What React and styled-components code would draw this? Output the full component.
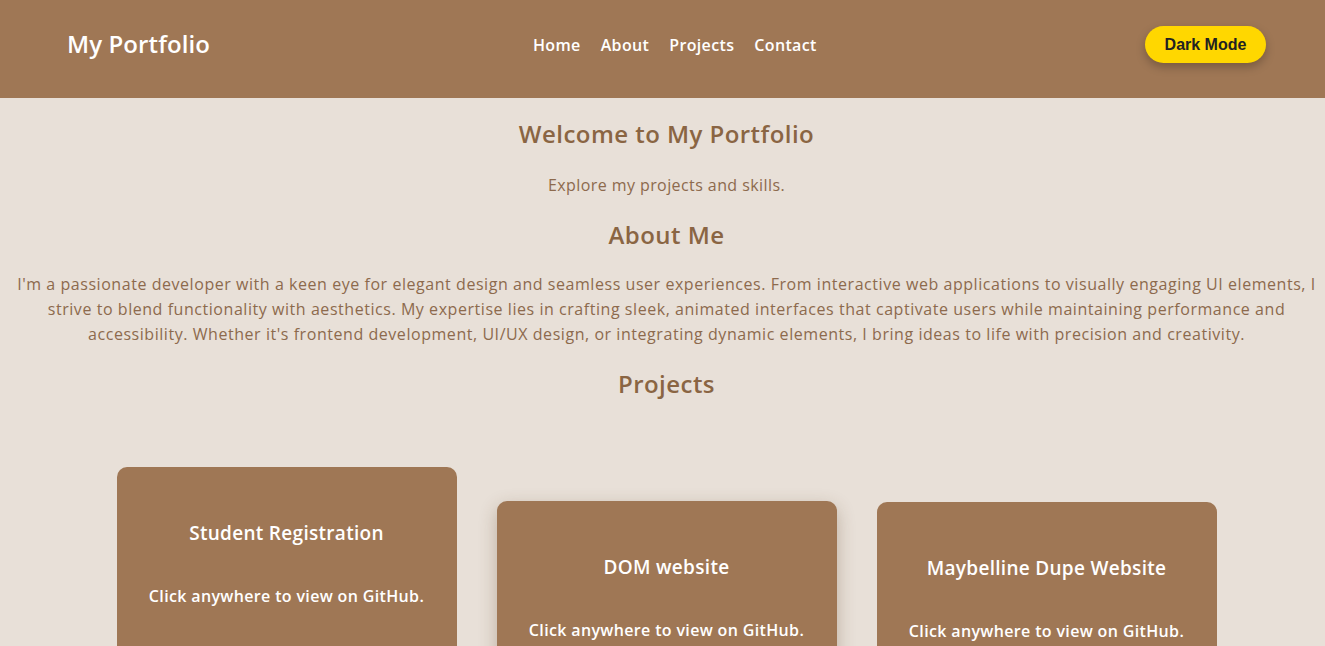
import React from "react"
import styled, { createGlobalStyle } from "styled-components"

const colors = {
  brown: "#9f7755",
  cream: "#e8e0d8",
  heading: "#8a6543",
  text: "#8d6a4d",
  yellow: "#ffd700",
}

const GlobalStyle = createGlobalStyle`
  html, body {
    margin: 0;
    padding: 0;
    overflow: hidden;
    background: ${colors.cream};
  }
  body {
    font-family: "Open Sans", "DejaVu Sans", sans-serif;
  }
`

const Page = styled.div`
  width: 1333px;
  min-height: 646px;
  background: ${colors.cream};
`

const Header = styled.header`
  height: 98px;
  background: ${colors.brown};
  display: flex;
  align-items: center;
  padding: 0 67px 8px;
  box-sizing: border-box;
`

const Logo = styled.h1`
  margin: -3px 0 0;
  font-size: 24px;
  font-weight: 600;
  color: #fff;
  width: 466px;
  letter-spacing: 0.1px;
`

const Nav = styled.nav`
  display: flex;
  gap: 20px;
  a {
    color: #fff;
    font-size: 16px;
    font-weight: 600;
    letter-spacing: 0.35px;
    text-decoration: none;
  }
`

const ModeButton = styled.button`
  margin-left: auto;
  background: ${colors.yellow};
  color: #222;
  border: none;
  border-radius: 20px;
  width: 121px;
  height: 37px;
  font-family: "Liberation Sans", Arial, sans-serif;
  font-size: 16px;
  font-weight: 700;
  box-shadow: 0 4px 10px rgba(0, 0, 0, 0.25);
  margin-top: -1px;
`

const Main = styled.main`
  text-align: center;
  padding: 0 14px;
`

const Title = styled.h2`
  margin: ${(p) => p.$top || 0}px 0 0;
  font-size: 24px;
  line-height: 36px;
  font-weight: 600;
  letter-spacing: 0.45px;
  color: ${colors.heading};
`

const Text = styled.p`
  margin: ${(p) => p.$top || 0}px 0 0;
  font-size: 16px;
  line-height: 25px;
  letter-spacing: ${(p) => p.$spacing || 0.42}px;
  color: ${colors.text};
`

const Cards = styled.div`
  display: flex;
  justify-content: center;
  gap: 40px;
  margin-top: 99px;
  align-items: flex-start;
`

const Card = styled.a`
  width: 340px;
  height: 240px;
  box-sizing: border-box;
  background: ${colors.brown};
  border-radius: 10px;
  color: #fff;
  text-decoration: none;
  padding-top: 52px;
  transform: translateY(${(p) => p.$lift || 0}px);
  box-shadow: ${(p) => (p.$shadow ? "0 6px 18px rgba(90, 60, 30, 0.3)" : "none")};
  h3 {
    margin: 0;
    font-size: 19px;
    line-height: 28px;
    font-weight: 600;
    letter-spacing: 0.3px;
  }
  p {
    margin: 37px 0 0;
    font-size: 16px;
    font-weight: 600;
    line-height: 24px;
    letter-spacing: 0.35px;
  }
`

const projects = [
  { name: "Student Registration", lift: -34 },
  { name: "DOM website", lift: 0, shadow: true },
  { name: "Maybelline Dupe Website", lift: 1 },
]

export default function App() {
  return (
    <Page>
      <GlobalStyle />
      <Header>
        <Logo>My Portfolio</Logo>
        <Nav>
          <a href="#home">Home</a>
          <a href="#about">About</a>
          <a href="#projects">Projects</a>
          <a href="#contact">Contact</a>
        </Nav>
        <ModeButton>Dark Mode</ModeButton>
      </Header>
      <Main>
        <Title $top={18}>Welcome to My Portfolio</Title>
        <Text $top={21}>Explore my projects and skills.</Text>
        <Title $top={19}>About Me</Title>
        <Text $top={19} $spacing={0.55}>
          I'm a passionate developer with a keen eye for elegant design and seamless user experiences. From
          interactive web applications to visually engaging UI elements, I strive to blend functionality with
          aesthetics. My expertise lies in crafting sleek, animated interfaces that captivate users while
          maintaining performance and accessibility. Whether it's frontend development, UI/UX design, or
          integrating dynamic elements, I bring ideas to life with precision and creativity.
        </Text>
        <Title $top={19}>Projects</Title>
        <Cards>
          {projects.map((p) => (
            <Card key={p.name} href="#" $lift={p.lift} $shadow={p.shadow}>
              <h3>{p.name}</h3>
              <p>Click anywhere to view on GitHub.</p>
            </Card>
          ))}
        </Cards>
      </Main>
    </Page>
  )
}
